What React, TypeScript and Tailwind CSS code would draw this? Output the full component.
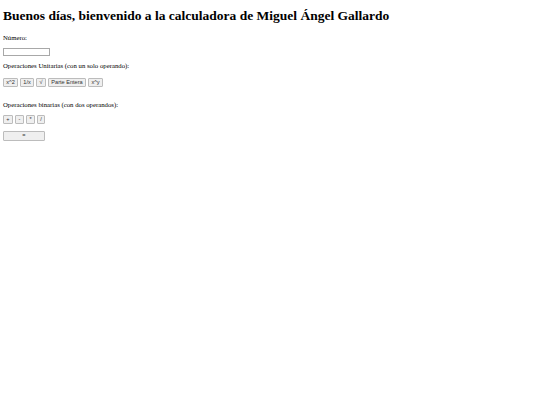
import { useState } from "react";

const unarias = [
  { label: "x^2", w: "w-[15px]" },
  { label: "1/x", w: "w-[14px]" },
  { label: "√", w: "w-[10px]" },
  { label: "Parte Entera", w: "w-[38px]" },
  { label: "x^y", w: "w-[15px]" },
];

const binarias = [
  { label: "+", w: "w-[10px]" },
  { label: "-", w: "w-[9px]" },
  { label: "*", w: "w-[9px]" },
  { label: "/", w: "w-[8px]" },
];

const btnClass =
  "h-[9px] flex items-center justify-center rounded-[1px] border border-[#bcbcbc] bg-[#efefef] text-[5.6px] leading-none text-[#333] font-['Liberation_Sans',Arial,sans-serif]";

export default function App() {
  const [numero, setNumero] = useState("");

  return (
    <div className="min-h-screen bg-white px-[3px] text-black font-['Liberation_Serif','Times_New_Roman',serif]">
      <h1 className="pt-[8px] text-[13.5px] leading-[15.5px] font-bold">
        Buenos días, bienvenido a la calculadora de Miguel Ángel Gallardo
      </h1>

      <p className="mt-[10px] text-[6.75px] leading-[7.75px]">Número:</p>
      <input
        type="text"
        value={numero}
        onChange={(e) => setNumero(e.target.value)}
        className="mt-[6.8px] block h-[8px] w-[47px] border border-[#a8a8a8] bg-white text-[5.6px] outline-none"
      />

      <p className="mt-[6.4px] text-[6.75px] leading-[7.75px]">Operaciones Unitarias (con un solo operando):</p>
      <div className="mt-[7.8px] flex gap-[2px]">
        {unarias.map((b) => (
          <button key={b.label} className={`${btnClass} ${b.w}`}>
            {b.label}
          </button>
        ))}
      </div>

      <p className="mt-[14.4px] text-[6.75px] leading-[7.75px]">Operaciones binarias (con dos operandos):</p>
      <div className="mt-[5.8px] flex gap-[2px]">
        {binarias.map((b) => (
          <button key={b.label} className={`${btnClass} ${b.w}`}>
            {b.label}
          </button>
        ))}
      </div>

      <button className={`${btnClass} mt-[7px] w-[42px] h-[10px]`}>=</button>
    </div>
  );
}
